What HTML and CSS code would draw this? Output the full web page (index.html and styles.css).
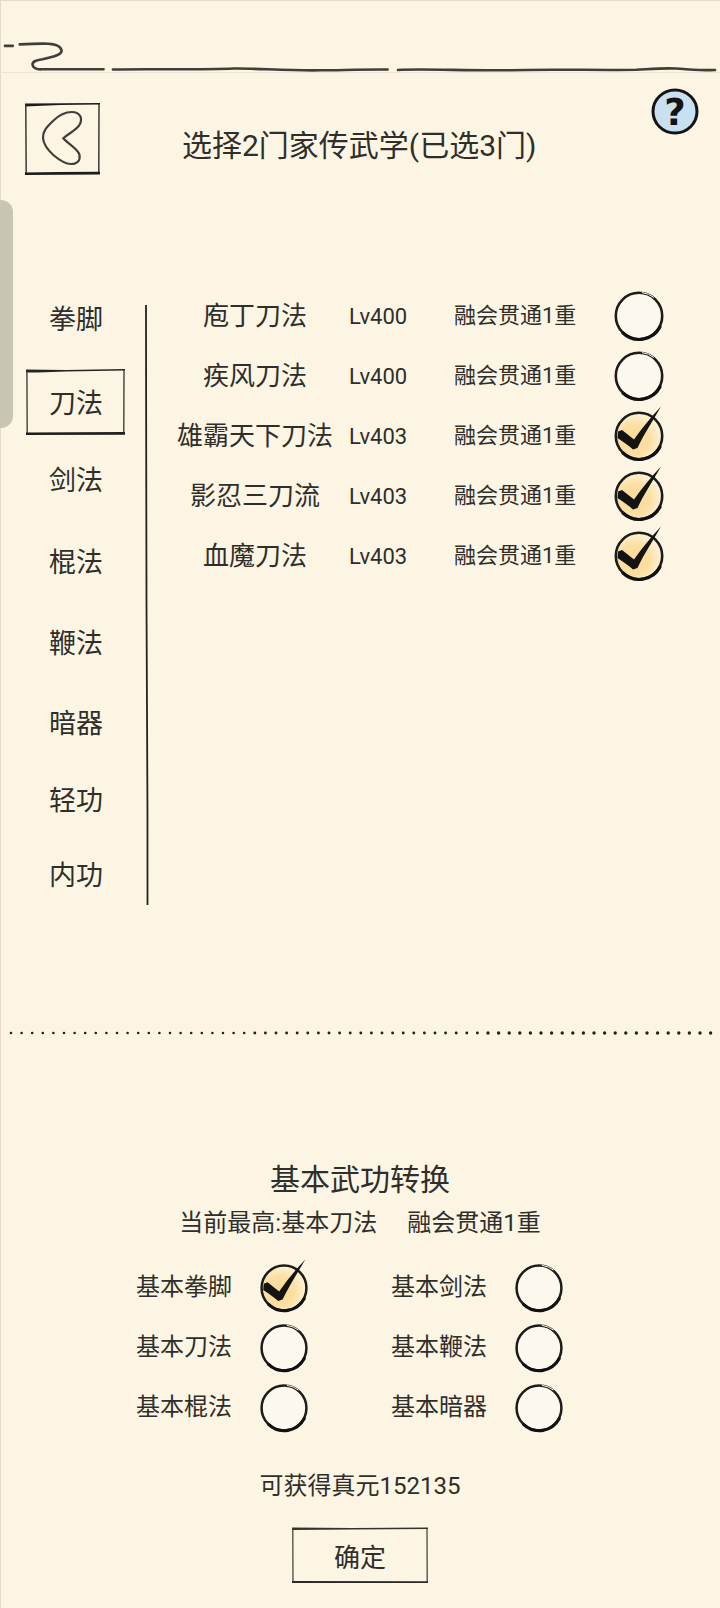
FILE: index.html
```html
<!DOCTYPE html>
<html lang="zh">
<head>
<meta charset="utf-8">
<title>选择家传武学</title>
<link rel="stylesheet" href="styles.css">
</head>
<body>
<svg class="defs" aria-hidden="true">
  <defs>
    <radialGradient id="wash" cx="40%" cy="58%" r="60%">
      <stop offset="0" stop-color="#fbdb95"/>
      <stop offset="0.55" stop-color="#fbdfa3"/>
      <stop offset="1" stop-color="#fdf3da"/>
    </radialGradient>
    <symbol id="ring" viewBox="-30 -30 60 60">
      <circle r="23.2" fill="#fdf8ee" stroke="#1c1c1a" stroke-width="2.6"/>
      <path d="M-16 17A23.6 23.6 0 0 0 21 11" fill="none" stroke="#111" stroke-width="3.2" stroke-linecap="round"/>
      <path d="M3-23.4A24 24 0 0 1 15-18.500" fill="none" stroke="#fdf8ee" stroke-width="1"/>
    </symbol>
    <symbol id="ticked" viewBox="-30 -30 60 60">
      <circle r="23.2" fill="url(#wash)" stroke="#1c1c1a" stroke-width="2.6"/>
      <path d="M-16 17A23.6 23.6 0 0 0 21 11" fill="none" stroke="#111" stroke-width="3.2" stroke-linecap="round"/>
      <path d="M-21-4.500-17-6-5 3.500C3-8 12-19 22-29.500 15-17 5-2-1.500 12L-6 13.500C-11 9-16 5.500-21.500 2Z" fill="#141412"/>
    </symbol>
  </defs>
</svg>
<main class="page">
  <div class="scroll-thumb"></div>

  <svg class="ink-band" viewBox="0 0 720 73" aria-hidden="true">
    <g fill="none" stroke="#3f3e39" stroke-width="2.600" stroke-linecap="round" stroke-linejoin="round">
      <path d="M0 46.500H8"/>
      <path d="M15 45C24 44.500 34 44 44 44.300 52 44.800 57 47.500 57.500 51.500 57.500 56 48 58 38 60 31 61 27.500 62.500 28 66 29 69 32 70.500 37 70.300H100"/>
      <path d="M109.500 70.500C140 69.800 200 71 232 69.500 250 69 290 72 320 71.300 345 71 365 70.300 388 70.500"/>
      <path d="M398.500 71C420 69.500 470 71.800 510 71.200 545 69.800 600 71.300 640 70.800 655 70 668 68.800 680 69.500 695 70.300 708 71.500 720 71"/>
    </g>
  </svg>

  <header class="topbar">
    <button class="back">
      <svg viewBox="0 0 75 72" aria-hidden="true">
        <path d="M0 .5L75 0V1.500L35 2 0 3.500Z" fill="#1c1c1a"/>
        <path d="M.8 1.500L1.200 72M74 1L73.800 71" fill="none" stroke="#2d2c29" stroke-width="1.400"/>
        <path d="M0 69.500L35 69 75 68.800V71.500L0 72Z" fill="#1c1c1a"/>
        <path d="M38.300 35.300C44 30 52 27 55 21 58 14 54 9 47 9 40 9 33 13 28 18 22 24 17.500 28 18 35 18.500 42 24 48 28.300 52 33 56 40 61 46 61 52 61 55.500 58 54.500 52 53.500 46 43 41 38.300 35.300Z" fill="none" stroke="#3f3e39" stroke-width="2.200"/>
      </svg>
    </button>
    <h1 class="title">选择2门家传武学(已选3门)</h1>
    <svg class="help" viewBox="0 0 50 48" aria-hidden="true">
      <ellipse cx="25" cy="23.500" rx="22" ry="21.500" fill="#c9e0f1" stroke="#141412" stroke-width="3"/>
      <text class="help-mark" x="25" y="37" text-anchor="middle">?</text>
    </svg>
  </header>

  <section class="main">
    <nav class="nav">
      <a class="nav-item">拳脚</a>
      <a class="nav-item is-active">
        <svg class="nav-frame" viewBox="0 0 99 65" preserveAspectRatio="none" aria-hidden="true">
          <path d="M0 .5L40 1 99 0V1.500L40 2.500 12 3.500 0 3.500Z" fill="#262522"/>
          <path d="M.9 1L1.200 64M98 1L97.800 64" fill="none" stroke="#33322e" stroke-width="1.300"/>
          <path d="M0 62.500L99 62V64.800L0 65Z" fill="#1f1e1b"/>
        </svg>
        刀法
      </a>
      <a class="nav-item">剑法</a>
      <a class="nav-item">棍法</a>
      <a class="nav-item">鞭法</a>
      <a class="nav-item">暗器</a>
      <a class="nav-item">轻功</a>
      <a class="nav-item">内功</a>
    </nav>

    <svg class="rule" viewBox="0 0 4 600" aria-hidden="true">
      <path d="M1 0C1 100 1.500 180 1.500 300 1.500 420 3 500 2.500 600" fill="none" stroke="#23221f" stroke-width="1.800"/>
    </svg>

    <div class="skills">
      <div class="skill">
        <span class="skill-name">庖丁刀法</span><span class="skill-lv">Lv400</span><span class="skill-rank">融会贯通1重</span>
        <svg class="radio"><use href="#ring"/></svg>
      </div>
      <div class="skill">
        <span class="skill-name">疾风刀法</span><span class="skill-lv">Lv400</span><span class="skill-rank">融会贯通1重</span>
        <svg class="radio"><use href="#ring"/></svg>
      </div>
      <div class="skill">
        <span class="skill-name">雄霸天下刀法</span><span class="skill-lv">Lv403</span><span class="skill-rank">融会贯通1重</span>
        <svg class="radio"><use href="#ticked"/></svg>
      </div>
      <div class="skill">
        <span class="skill-name">影忍三刀流</span><span class="skill-lv">Lv403</span><span class="skill-rank">融会贯通1重</span>
        <svg class="radio"><use href="#ticked"/></svg>
      </div>
      <div class="skill">
        <span class="skill-name">血魔刀法</span><span class="skill-lv">Lv403</span><span class="skill-rank">融会贯通1重</span>
        <svg class="radio"><use href="#ticked"/></svg>
      </div>
    </div>
  </section>

  <svg class="dots" viewBox="0 0 720 10" aria-hidden="true">
    <path d="M11 5H244.300" class="dots-fine"/>
    <path d="M254.800 5H477.500" class="dots-mid"/>
    <path d="M488 5H712" class="dots-bold"/>
  </svg>

  <section class="convert">
    <h2 class="convert-title">基本武功转换</h2>
    <p class="convert-sub"><span>当前最高:基本刀法</span><span>融会贯通1重</span></p>
    <div class="convert-grid">
      <div class="option"><span class="option-label">基本拳脚</span><svg class="radio radio-small"><use href="#ticked"/></svg></div>
      <div class="option"><span class="option-label">基本剑法</span><svg class="radio radio-small"><use href="#ring"/></svg></div>
      <div class="option"><span class="option-label">基本刀法</span><svg class="radio radio-small"><use href="#ring"/></svg></div>
      <div class="option"><span class="option-label">基本鞭法</span><svg class="radio radio-small"><use href="#ring"/></svg></div>
      <div class="option"><span class="option-label">基本棍法</span><svg class="radio radio-small"><use href="#ring"/></svg></div>
      <div class="option"><span class="option-label">基本暗器</span><svg class="radio radio-small"><use href="#ring"/></svg></div>
    </div>
    <p class="reward">可获得真元152135</p>
    <button class="confirm">
      <svg class="confirm-frame" viewBox="0 0 136 55" preserveAspectRatio="none" aria-hidden="true">
        <path d="M0 .5L60 1 136 .5V2L60 2.500 0 3Z" fill="#33322e"/>
        <path d="M.8 1L1 55M135 1L135.200 54" fill="none" stroke="#3a3935" stroke-width="1.200"/>
        <path d="M0 53L136 53.200V55L0 55Z" fill="#2a2926"/>
      </svg>
      确定
    </button>
  </section>
</main>
</body>
</html>
```
FILE: styles.css
```css
* {
  box-sizing: border-box;
}

html,
body {
  margin: 0;
  padding: 0;
  background: #fcf5e4;
}

body {
  font-family: Roboto, "Noto Sans CJK SC", sans-serif;
  color: #2f2e2b;
}

.defs {
  display: block;
  width: 0;
  height: 0;
}

.page {
  position: relative;
  width: 720px;
  height: 1608px;
  overflow: hidden;
  background: #fcf5e4;
  box-shadow: inset 1px 1px 0 #e4dcc8;
}

.scroll-thumb {
  position: absolute;
  left: 0;
  top: 200px;
  width: 13px;
  height: 228px;
  border-radius: 0 12px 12px 0;
  background: #c9c5b4;
}

.ink-band {
  display: block;
  width: 720px;
  height: 73px;
  border-bottom: 1px solid #eee6d3;
}

.topbar {
  display: flex;
  align-items: flex-start;
  height: 213px;
  padding: 0 20px 0 25px;
}

.back {
  flex: none;
  width: 75px;
  height: 72px;
  margin-top: 30px;
  padding: 0;
  border: 0;
  background: none;
}

.back svg {
  display: block;
  width: 75px;
  height: 72px;
}

.title {
  margin: 53px 0 0 82px;
  font-size: 30px;
  font-weight: 400;
  line-height: 40px;
  white-space: nowrap;
}

.help {
  flex: none;
  width: 50px;
  height: 48px;
  margin: 15px 0 0 auto;
}

.help-mark {
  font-family: "DejaVu Sans", sans-serif;
  font-size: 37px;
  font-weight: 700;
  fill: #141412;
}

.main {
  display: flex;
  align-items: flex-start;
  height: 742px;
}

.nav {
  display: grid;
  flex: none;
  grid-template-rows: 84px 77px 82px 81px 80px 77px 75px 40px;
  width: 100px;
  margin: 14px 19px 0 26px;
}

.nav-item {
  position: relative;
  display: block;
  height: 40px;
  font-size: 27px;
  line-height: 40px;
  text-align: center;
}

.nav-frame {
  position: absolute;
  left: 0;
  top: -15px;
  width: 99px;
  height: 66px;
}

.rule {
  flex: none;
  width: 4px;
  height: 600px;
  margin: 19px 0 0;
}

.skills {
  display: flex;
  flex-direction: column;
  padding-left: 3px;
}

.skill {
  display: flex;
  align-items: center;
  height: 60px;
}

.skill-name {
  width: 197px;
  margin-bottom: 5px;
  padding-left: 9px;
  font-size: 26px;
  text-align: center;
  white-space: nowrap;
}

.skill-lv {
  width: 105px;
  font-size: 22px;
}

.skill-rank {
  width: 155px;
  margin-bottom: 6px;
  font-size: 22px;
  white-space: nowrap;
}

.radio {
  flex: none;
  display: block;
  width: 60px;
  height: 60px;
  overflow: visible;
}

.radio-small {
  width: 58px;
  height: 58px;
}

.dots {
  display: block;
  width: 720px;
  height: 10px;
}

.dots-fine,
.dots-mid,
.dots-bold {
  fill: none;
  stroke: #22211e;
  stroke-linecap: round;
  stroke-dasharray: 0 10.600;
}

.dots-fine {
  stroke-width: 2.600;
}

.dots-mid {
  stroke-width: 2.900;
}

.dots-bold {
  stroke-width: 3.400;
}

.convert {
  display: flex;
  flex-direction: column;
  align-items: center;
  padding-top: 122px;
}

.convert-title {
  margin: 0;
  font-size: 30px;
  font-weight: 400;
  line-height: 40px;
}

.convert-sub {
  display: flex;
  gap: 30px;
  margin: 5px 0 0;
  font-size: 24px;
  line-height: 36px;
}

.convert-grid {
  display: grid;
  grid-template-columns: 255px 255px;
  grid-auto-rows: 60px;
  align-self: flex-start;
  margin: 17px 0 0 136px;
}

.option {
  display: flex;
  align-items: center;
}

.option-label {
  width: 119px;
  margin-bottom: 8px;
  font-size: 24px;
  white-space: nowrap;
}

.reward {
  margin: 30px 0 0;
  font-size: 24px;
  line-height: 36px;
}

.confirm {
  position: relative;
  width: 136px;
  height: 56px;
  margin-top: 23px;
  padding: 6px 0 0;
  border: 0;
  background: none;
  color: inherit;
  font: inherit;
  font-size: 26px;
  line-height: 50px;
}

.confirm-frame {
  position: absolute;
  left: 0;
  top: 0;
  width: 136px;
  height: 56px;
}
```
